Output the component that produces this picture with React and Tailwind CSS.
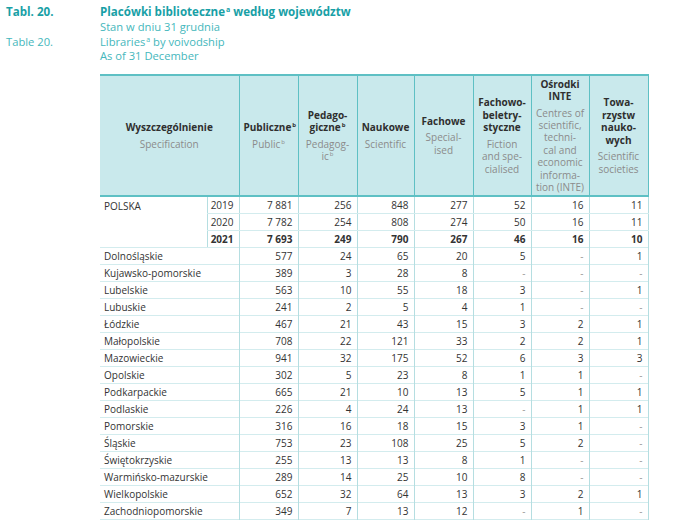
const font = { fontFamily: '"Open Sans", "Noto Sans", sans-serif' }

const rows = [
  ['Dolnośląskie', '577', '24', '65', '20', '5', '-', '1'],
  ['Kujawsko-pomorskie', '389', '3', '28', '8', '-', '-', '-'],
  ['Lubelskie', '563', '10', '55', '18', '3', '-', '1'],
  ['Lubuskie', '241', '2', '5', '4', '1', '-', '-'],
  ['Łódzkie', '467', '21', '43', '15', '3', '2', '1'],
  ['Małopolskie', '708', '22', '121', '33', '2', '2', '1'],
  ['Mazowieckie', '941', '32', '175', '52', '6', '3', '3'],
  ['Opolskie', '302', '5', '23', '8', '1', '1', '-'],
  ['Podkarpackie', '665', '21', '10', '13', '5', '1', '1'],
  ['Podlaskie', '226', '4', '24', '13', '-', '1', '1'],
  ['Pomorskie', '316', '16', '18', '15', '3', '1', '-'],
  ['Śląskie', '753', '23', '108', '25', '5', '2', '-'],
  ['Świętokrzyskie', '255', '13', '13', '8', '1', '-', '-'],
  ['Warmińsko-mazurskie', '289', '14', '25', '10', '8', '-', '-'],
  ['Wielkopolskie', '652', '32', '64', '13', '3', '2', '1'],
  ['Zachodniopomorskie', '349', '7', '13', '12', '-', '1', '-'],
]

const polska = [
  ['2019', ['7\u00a0881', '256', '848', '277', '52', '16', '11']],
  ['2020', ['7\u00a0782', '254', '808', '274', '50', '16', '11']],
  ['2021', ['7\u00a0693', '249', '790', '267', '46', '16', '10']],
]

// [polish lines, english lines]; each line is [text, superscript?]
const heads = [
  [[['Publiczne', 'b']], [['Public', 'b']]],
  [[['Pedago-'], ['giczne', 'b']], [['Pedagog-'], ['ic', 'b']]],
  [[['Naukowe']], [['Scientific']]],
  [[['Fachowe']], [['Special-'], ['ised']]],
  [[['Fachowo-'], ['beletry-'], ['styczne']], [['Fiction'], ['and spe-'], ['cialised']]],
  [[['Ośrodki'], ['INTE']], [['Centres of'], ['scientific,'], ['techni-'], ['cal and'], ['economic'], ['informa-'], ['tion (INTE)']]],
  [[['Towa-'], ['rzystw'], ['nauko-'], ['wych']], [['Scientific'], ['societies']]],
]

function Sup({ children, size = 'text-[6px]' }) {
  return <span className={`${size} align-[4px] leading-none ml-px`}>{children}</span>
}

function Lines({ lines, className }) {
  return (
    <div className={className}>
      {lines.map(([t, s], i) => (
        <div key={i}>{t}{s && <Sup>{s}</Sup>}</div>
      ))}
    </div>
  )
}

function Head({ pl, en }) {
  return (
    <th className="border-x border-[#5ec0c4] align-middle px-1 text-center font-normal">
      <Lines lines={pl} className="font-bold text-[#2f2f2f] leading-[12.4px]" />
      <Lines lines={en} className="mt-[4px] text-[#8b8b8b] leading-[12.4px]" />
    </th>
  )
}

function Num({ v }) {
  const dash = v === '-'
  return (
    <td className={`border-x border-[#b5dee1] pr-[5px] text-right ${dash ? 'text-[#9a9a9a]' : ''}`}>
      {v}
    </td>
  )
}

export default function App() {
  return (
    <div className="w-[690px] h-[524px] bg-white overflow-hidden text-[#333]" style={font}>
      {/* ── title ─────────────────────────────────────────── */}
      <div className="flex pt-[5px] pl-[6px] text-[11.2px] leading-[14.8px]">
        <div className="w-[94px] shrink-0">
          <div className="font-bold text-[11.6px] text-[#18a0a6]">Tabl. 20.</div>
          <div className="mt-[14.8px] text-[#45b7bc]">Table 20.</div>
        </div>
        <div>
          <div className="font-bold text-[11.6px] text-[#18a0a6]">
            Placówki biblioteczne<Sup size="text-[7px]">a</Sup> według województw
          </div>
          <div className="text-[#45b7bc]">Stan w dniu 31 grudnia</div>
          <div className="text-[#45b7bc]">
            Libraries<Sup size="text-[7px]">a</Sup> by voivodship
          </div>
          <div className="text-[#45b7bc]">As of 31 December</div>
        </div>
      </div>

      {/* ── table ─────────────────────────────────────────── */}
      <table className="ml-[100px] mt-[10px] w-[548px] table-fixed border-collapse text-[10px]">
        <colgroup>
          <col className="w-[107px]" />
          <col className="w-[32px]" />
          <col className="w-[59px]" />
          <col className="w-[59px]" />
          <col className="w-[57px]" />
          <col className="w-[59px]" />
          <col className="w-[58px]" />
          <col className="w-[58px]" />
          <col className="w-[59px]" />
        </colgroup>
        <thead>
          <tr className="h-[121px] bg-[#c9e9ec] border-y-2 border-[#5ec0c4]">
            <th colSpan={2} className="align-middle text-center font-normal border-r border-[#5ec0c4]">
              <div className="font-bold text-[#2f2f2f] leading-[12.4px]">Wyszczególnienie</div>
              <div className="mt-[4px] text-[#8b8b8b] leading-[12.4px]">Specification</div>
            </th>
            {heads.map(([pl, en], i) => (
              <Head key={i} pl={pl} en={en} />
            ))}
          </tr>
        </thead>
        <tbody className="leading-none">
          {polska.map(([year, vals], i) => (
            <tr key={year} className={`h-[17px] ${i === 2 ? 'border-b border-[#d3ecee]' : ''}`}>
              {i === 0 && (
                <td rowSpan={3} className="align-top pl-[4px] pt-[4px] border-b border-[#d3ecee]">POLSKA</td>
              )}
              <td className={`border-x border-[#b5dee1] text-right pr-[5px] ${i < 2 ? 'border-b border-b-[#d3ecee]' : ''} ${i === 2 ? 'font-bold' : ''}`}>
                {year}
              </td>
              {vals.map((v, j) => (
                <td
                  key={j}
                  className={`border-x border-[#b5dee1] pr-[5px] text-right ${i < 2 ? 'border-b border-b-[#d3ecee]' : ''} ${i === 2 ? 'font-bold' : ''}`}
                >
                  {v}
                </td>
              ))}
            </tr>
          ))}
          {rows.map(([name, ...vals]) => (
            <tr key={name} className="h-[17px] border-b border-[#d3ecee]">
              <td colSpan={2} className="pl-[4px] border-r border-[#b5dee1] whitespace-nowrap">{name}</td>
              {vals.map((v, j) => (
                <Num key={j} v={v} />
              ))}
            </tr>
          ))}
        </tbody>
      </table>
    </div>
  )
}
